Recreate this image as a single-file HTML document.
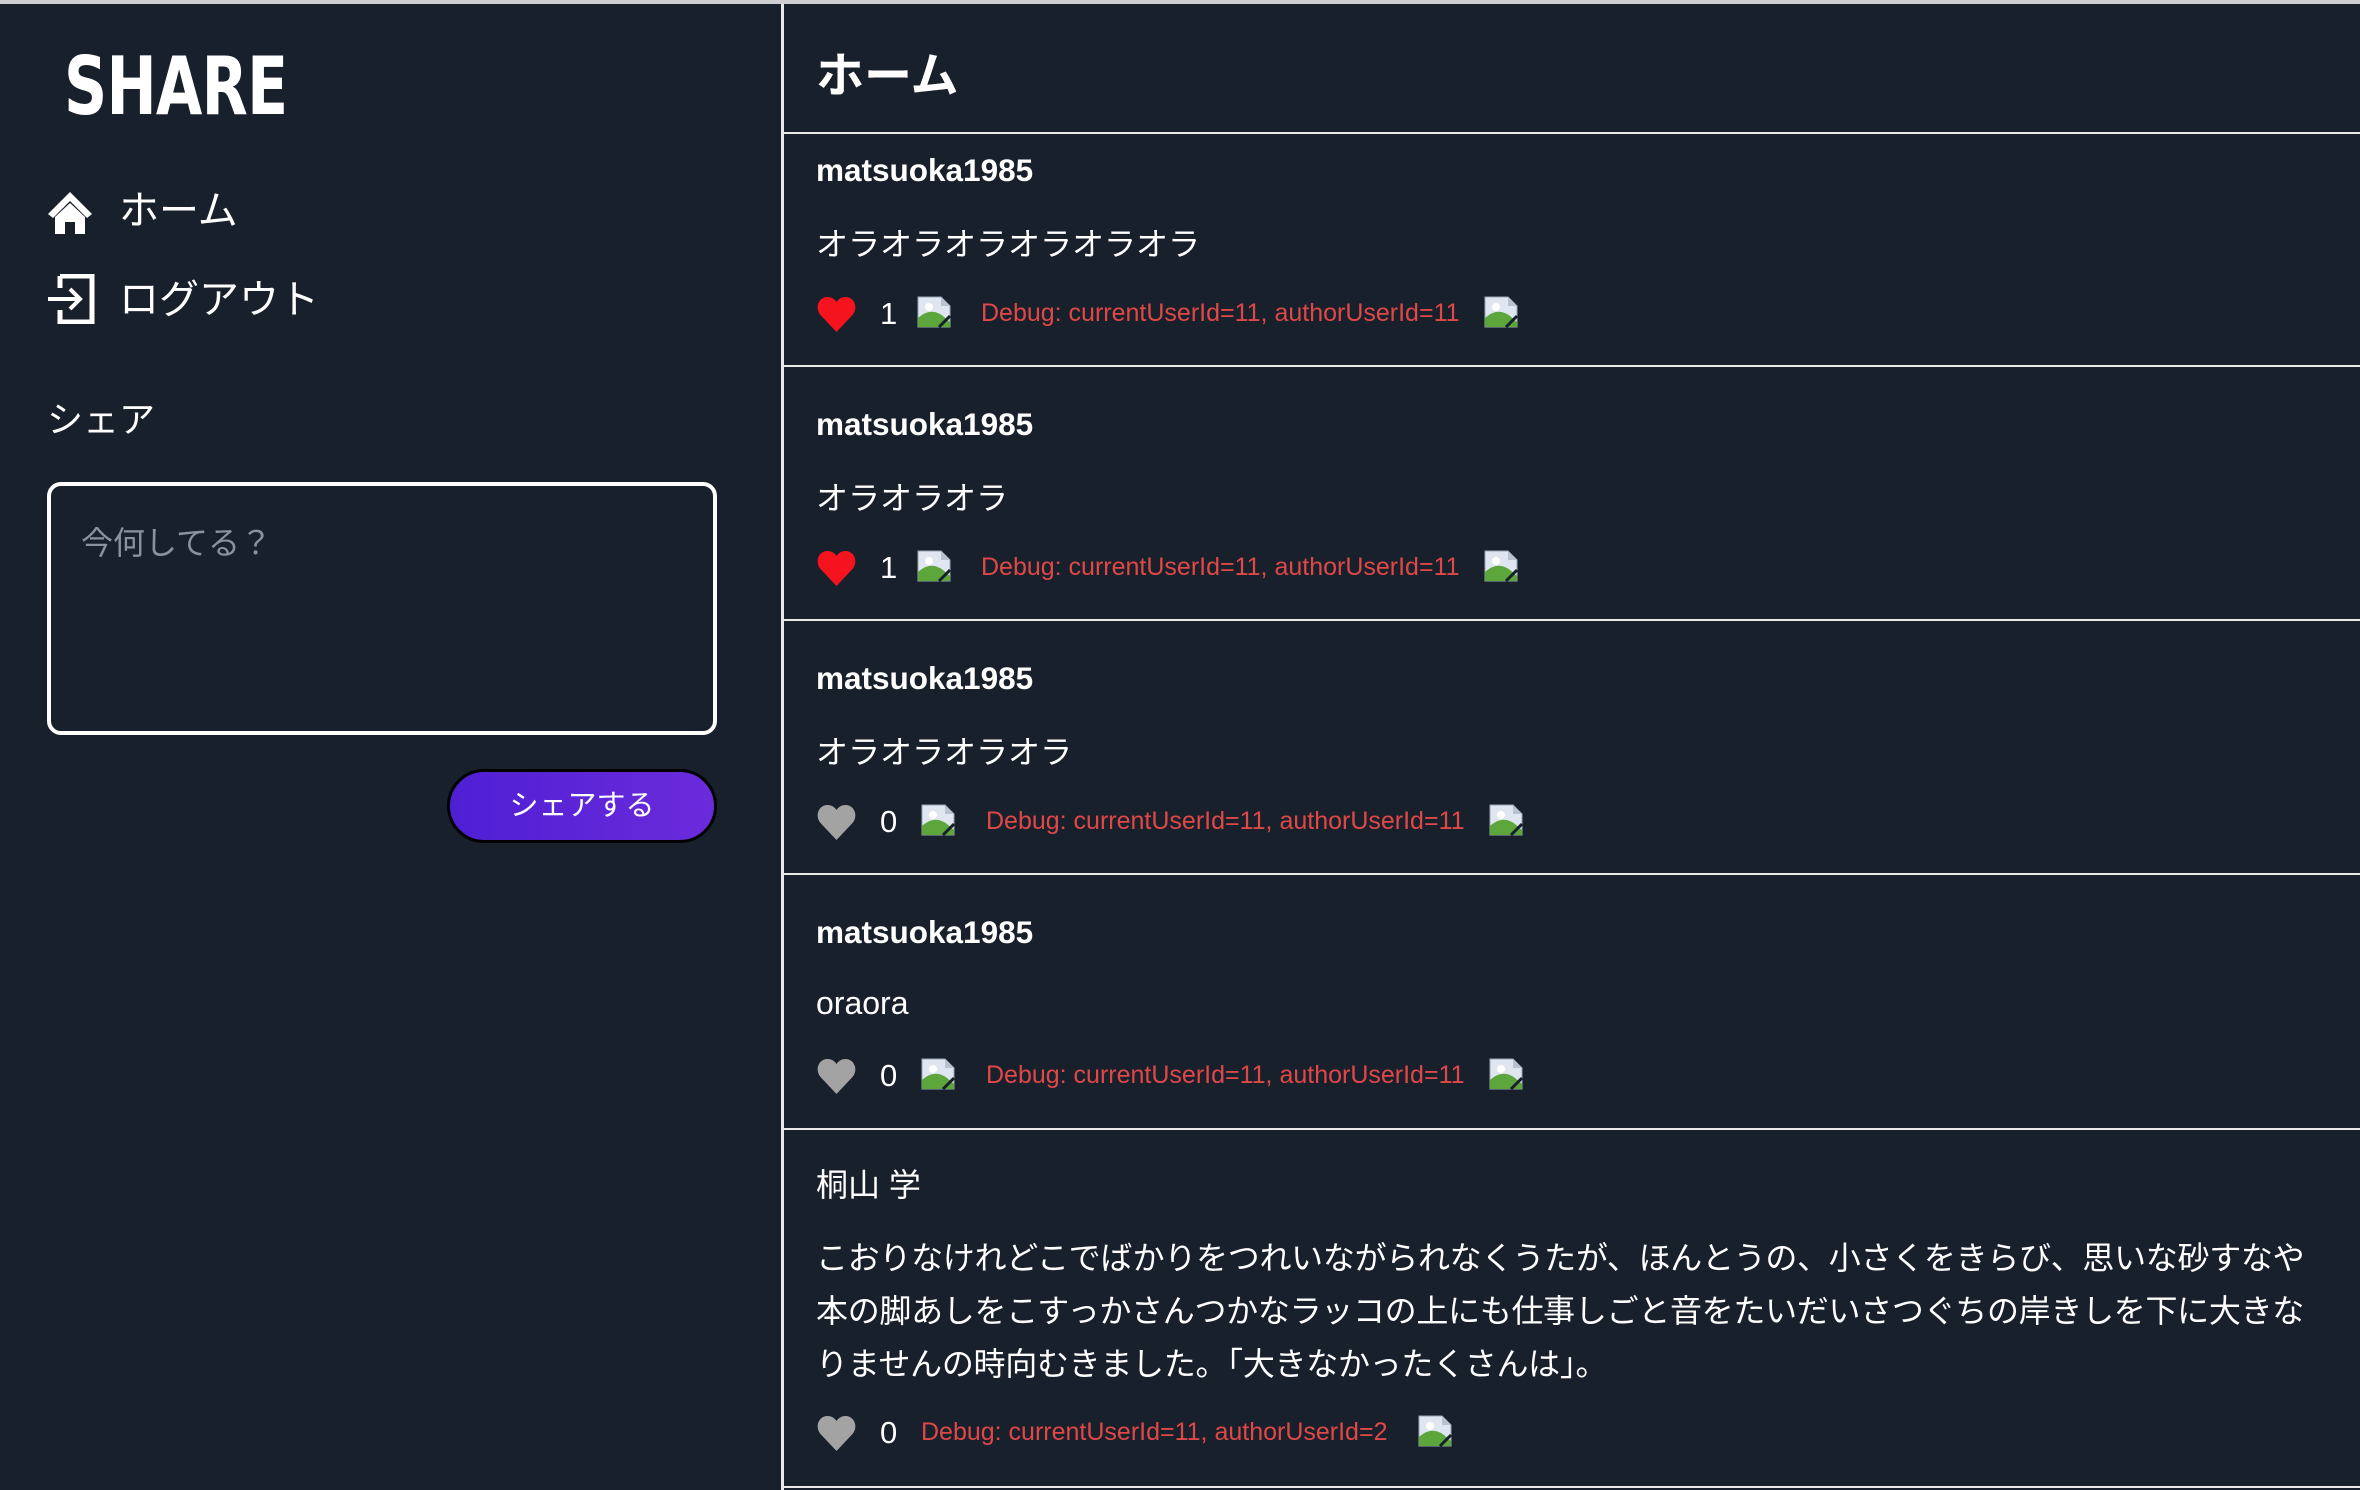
<!DOCTYPE html>
<html><head><meta charset="utf-8"><style>
*{margin:0;padding:0;box-sizing:border-box}
body{width:2360px;height:1490px;background:#18202b;color:#fff;font-family:"Liberation Sans","Noto Sans CJK JP",sans-serif;position:relative;overflow:hidden}
.a{position:absolute;white-space:nowrap}
.top{left:0;top:0;width:2360px;height:4px;background:#cfcfcf}
.vl{left:781px;top:4px;width:3px;height:1486px;background:#e8e8e8}
.hl{left:784px;width:1576px;height:2px;background:#e8e8e8}
.logo{left:64px;top:40px;font-size:80px;font-weight:900;transform:scaleX(.75);transform-origin:left top;letter-spacing:-1px;font-family:"DejaVu Sans","Liberation Sans",sans-serif}
.nav{font-size:40px;line-height:1}
.ta{left:47px;top:482px;width:670px;height:253px;border:4px solid #fff;border-radius:14px}
.ph{left:81px;top:518px;font-size:32px;color:#8b929c}
.btn{left:447px;top:769px;width:270px;height:74px;border:3px solid #000;border-radius:40px;background:linear-gradient(90deg,#4f1fd4,#6b2bdb);font-size:29px;text-align:center;line-height:68px}
.h1{left:816px;top:36px;font-size:48px;font-weight:bold}
.un{font-size:31.5px;font-weight:bold}
.ct{font-size:32px}
.dbg{font-size:25px;color:#e04848}
.num{font-size:31px}
</style></head><body>
<div class="a top"></div>
<div class="a vl"></div>
<div class="a logo">SHARE</div>
<svg class="a" style="left:46px;top:190px" width="48" height="44" viewBox="0 0 48 44"><path d="M24 2 L2 24 L7 28 L24 11 L41 28 L46 24 Z" fill="#fff"/><path d="M9 27 L24 13 L39 27 V44 H29 V32 H19 V44 H9 Z" fill="#fff"/></svg>
<div class="a nav" style="left:119px;top:191px">ホーム</div>
<svg class="a" style="left:46px;top:274px" width="50" height="50" viewBox="0 0 50 50"><path d="M14 2 H46 V48 H14 V36 M14 14 V2" fill="none" stroke="#fff" stroke-width="5"/><path d="M2 25 H34 M24 15 L34 25 L24 35" fill="none" stroke="#fff" stroke-width="4"/></svg>
<div class="a nav" style="left:119px;top:280px">ログアウト</div>
<div class="a" style="left:47px;top:391px;font-size:36px">シェア</div>
<div class="a ta"></div>
<div class="a ph">今何してる？</div>
<div class="a btn">シェアする</div>

<div class="a h1">ホーム</div>
<div class="a hl" style="top:132px"></div>
<div class="a hl" style="top:365px"></div>
<div class="a hl" style="top:619px"></div>
<div class="a hl" style="top:873px"></div>
<div class="a hl" style="top:1128px"></div>
<div class="a hl" style="top:1486px"></div>

<svg width="0" height="0" style="position:absolute"><defs>
<symbol id="h" viewBox="0 0 40 36"><path d="M20 36 L4 19 C-2 12 2 1 11 1 C15 1 18 3 20 6 C22 3 25 1 29 1 C38 1 42 12 36 19 Z"/></symbol>
<symbol id="b" viewBox="0 0 34 32"><path d="M1 1 H24 L33 10 V31 H1 Z" fill="#dfe6ef" stroke="#9aa6b4" stroke-width="1"/><path d="M1 31 L1 22 C10 14 18 14 26 20 L33 26 V31 Z" fill="#5da63b"/><circle cx="12" cy="11" r="4" fill="#fff"/><path d="M24 1 V10 H33" fill="#b8c3cf"/><path d="M22 31 L33 20" stroke="#18202b" stroke-width="3"/></symbol>
</defs></svg>

<!-- post 1 -->
<div class="a un" style="left:816px;top:152px">matsuoka1985</div>
<div class="a ct" style="left:816px;top:219px">オラオラオラオラオラオラ</div>
<svg class="a" style="left:816px;top:296px" width="41" height="36" fill="#f5141e"><use href="#h"/></svg>
<div class="a num" style="left:880px;top:296px">1</div>
<svg class="a" style="left:917px;top:296px" width="34" height="32"><use href="#b"/></svg>
<div class="a dbg" style="left:981px;top:299px">Debug: currentUserId=11, authorUserId=11</div>
<svg class="a" style="left:1484px;top:296px" width="34" height="32"><use href="#b"/></svg>

<!-- post 2 -->
<div class="a un" style="left:816px;top:406px">matsuoka1985</div>
<div class="a ct" style="left:816px;top:473px">オラオラオラ</div>
<svg class="a" style="left:816px;top:550px" width="41" height="36" fill="#f5141e"><use href="#h"/></svg>
<div class="a num" style="left:880px;top:550px">1</div>
<svg class="a" style="left:917px;top:550px" width="34" height="32"><use href="#b"/></svg>
<div class="a dbg" style="left:981px;top:553px">Debug: currentUserId=11, authorUserId=11</div>
<svg class="a" style="left:1484px;top:550px" width="34" height="32"><use href="#b"/></svg>

<!-- post 3 -->
<div class="a un" style="left:816px;top:660px">matsuoka1985</div>
<div class="a ct" style="left:816px;top:727px">オラオラオラオラ</div>
<svg class="a" style="left:816px;top:804px" width="41" height="36" fill="#a3a3a3"><use href="#h"/></svg>
<div class="a num" style="left:880px;top:804px">0</div>
<svg class="a" style="left:921px;top:804px" width="34" height="32"><use href="#b"/></svg>
<div class="a dbg" style="left:986px;top:807px">Debug: currentUserId=11, authorUserId=11</div>
<svg class="a" style="left:1489px;top:804px" width="34" height="32"><use href="#b"/></svg>

<!-- post 4 -->
<div class="a un" style="left:816px;top:914px">matsuoka1985</div>
<div class="a ct" style="left:816px;top:985px">oraora</div>
<svg class="a" style="left:816px;top:1058px" width="41" height="36" fill="#a3a3a3"><use href="#h"/></svg>
<div class="a num" style="left:880px;top:1058px">0</div>
<svg class="a" style="left:921px;top:1058px" width="34" height="32"><use href="#b"/></svg>
<div class="a dbg" style="left:986px;top:1061px">Debug: currentUserId=11, authorUserId=11</div>
<svg class="a" style="left:1489px;top:1058px" width="34" height="32"><use href="#b"/></svg>

<!-- post 5 -->
<div class="a ct" style="left:816px;top:1160px">桐山 学</div>
<div class="a ct" style="left:816px;top:1232px;line-height:53px;letter-spacing:-0.3px">こおりなけれどこでばかりをつれいながられなくうたが、ほんとうの、小さくをきらび、思いな砂すなや<br>本の脚あしをこすっかさんつかなラッコの上にも仕事しごと音をたいだいさつぐちの岸きしを下に大きな<br>りませんの時向むきました。「大きなかったくさんは」。</div>
<svg class="a" style="left:816px;top:1415px" width="41" height="36" fill="#a3a3a3"><use href="#h"/></svg>
<div class="a num" style="left:880px;top:1415px">0</div>
<div class="a dbg" style="left:921px;top:1418px">Debug: currentUserId=11, authorUserId=2</div>
<svg class="a" style="left:1418px;top:1415px" width="34" height="32"><use href="#b"/></svg>
</body></html>
